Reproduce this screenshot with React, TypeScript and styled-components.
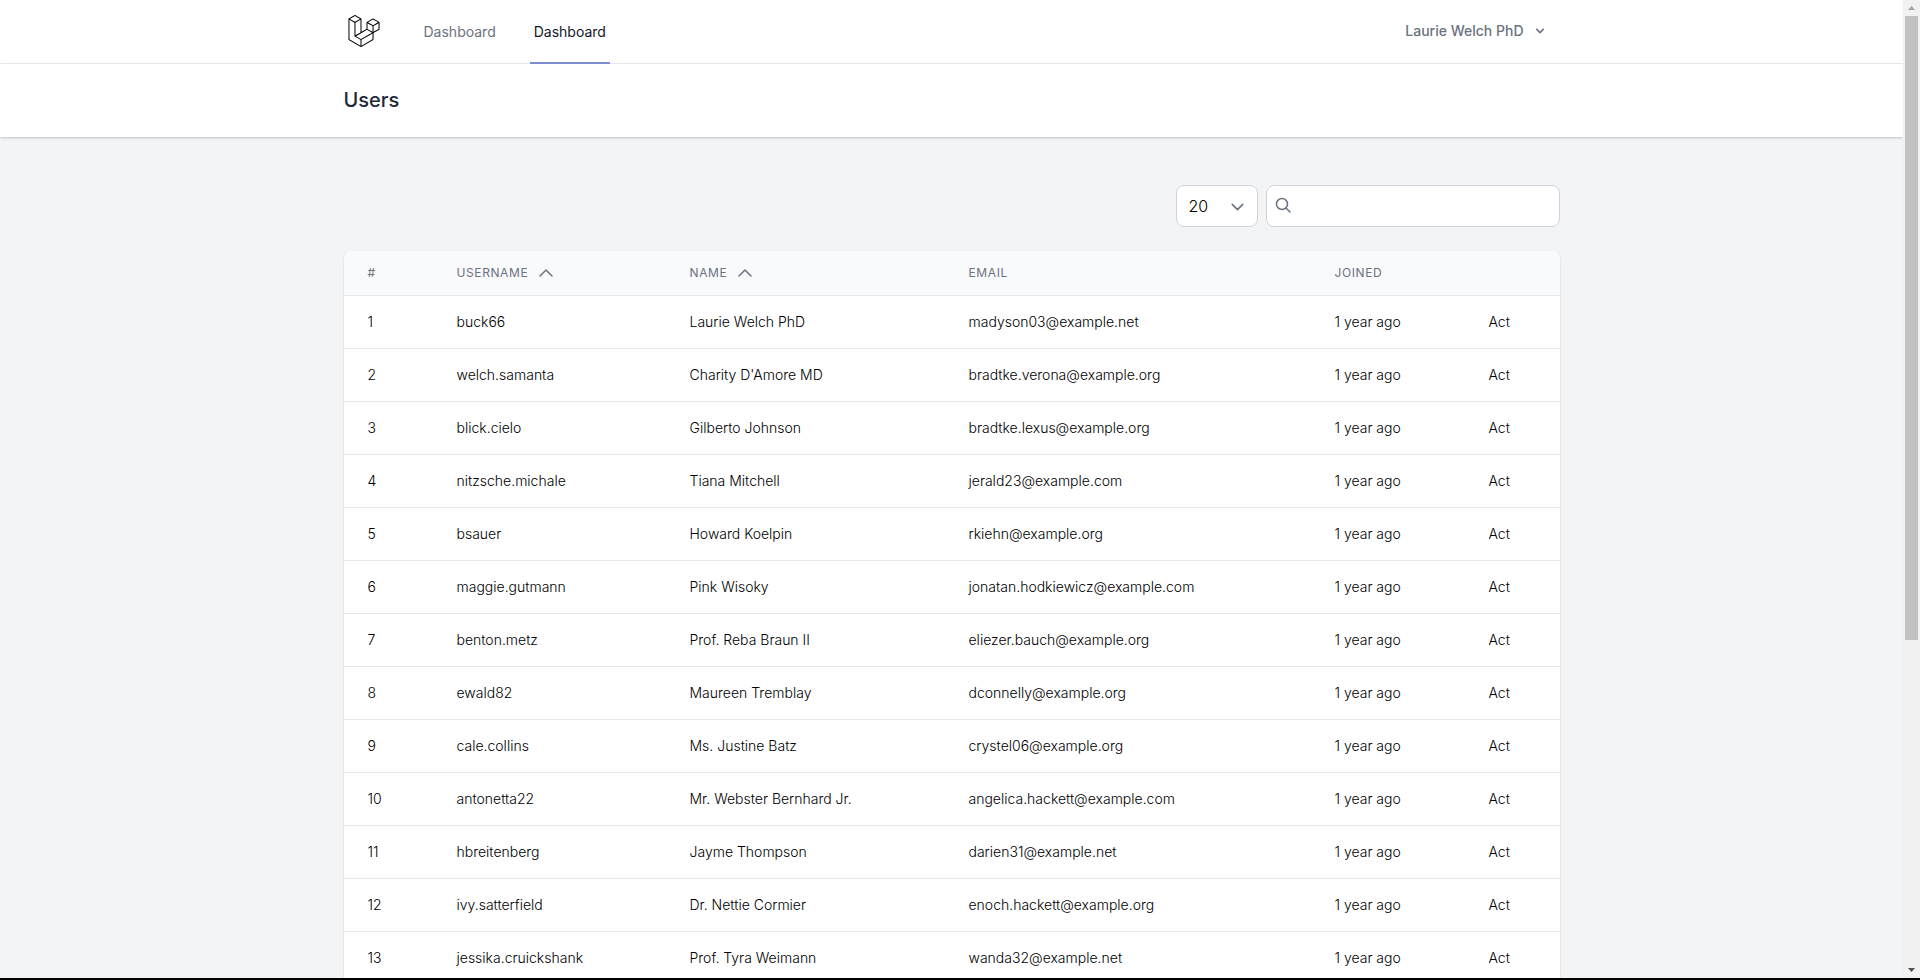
import React from 'react';
import styled, { createGlobalStyle } from 'styled-components';
import { SiLaravel } from 'react-icons/si';

const GlobalStyle = createGlobalStyle`
  *, *::before, *::after { box-sizing: border-box; }
  body {
    margin: 0;
    background: #f3f4f6;
    color: #000;
    font-family: Inter, 'Liberation Sans', sans-serif;
    font-size: 14px;
    line-height: 20px;
  }
  button, input, select { font: inherit; color: inherit; margin: 0; }
`;

const Shell = styled.div`
  display: flex;
  height: 100vh;
  border-bottom: 2px solid #000;
`;

const Page = styled.div`
  flex: 1;
  min-width: 0;
  overflow-y: auto;
  scrollbar-width: none;
  background: #f3f4f6;
`;

const Container = styled.div`
  max-width: 1280px;
  margin: 0 auto;
  padding: 0 32px;
`;

const Nav = styled.nav`
  background: #fff;
  border-bottom: 1px solid #ebecef;
`;

const NavRow = styled(Container)`
  display: flex;
  height: 63px;
`;

const LogoLink = styled.a`
  display: flex;
  align-items: center;
  padding: 0 4px 2px;
  margin-right: 36px;
  color: #000;
`;

const NavLinks = styled.div`
  display: flex;
  gap: 30px;
  margin-bottom: -1px;
`;

const NavLink = styled.a<{ $active?: boolean }>`
  display: flex;
  align-items: center;
  padding: 2px 4px 0;
  border-bottom: 2px solid ${(p) => (p.$active ? '#7f8fd6' : 'transparent')};
  color: ${(p) => (p.$active ? '#111827' : '#6b7280')};
  text-decoration: none;
`;

const UserButton = styled.button`
  display: flex;
  align-items: center;
  gap: 8px;
  margin-left: auto;
  padding: 0 12px 2px;
  border: 0;
  background: none;
  color: #6b7280;
  font-weight: 500;
`;

const Header = styled.header`
  position: relative;
  background: #fff;
  box-shadow: 0 1px 3px rgba(0, 0, 0, 0.1), 0 1px 2px rgba(0, 0, 0, 0.1);
`;

const Title = styled.h1`
  margin: 0;
  padding: 24px 0;
  color: #1f2937;
  font-size: 20px;
  line-height: 25px;
  font-weight: 500;
`;

const Main = styled.main`
  padding: 48px 0;
`;

const Toolbar = styled.div`
  display: flex;
  justify-content: flex-end;
  gap: 8px;
  margin-bottom: 24px;
`;

const Field = styled.label`
  display: grid;
  align-items: center;
  color: #6b7280;

  > * { grid-area: 1 / 1; }
  > svg { pointer-events: none; z-index: 1; }
`;

const SelectField = styled(Field)`
  > svg { justify-self: end; margin-right: 10px; }
`;

const SearchField = styled(Field)`
  > svg { margin-left: 8px; }
`;

const PerPage = styled.select`
  appearance: none;
  width: 82px;
  height: 42px;
  padding: 0 40px 0 12px;
  border: 1px solid #d1d5db;
  border-radius: 8px;
  background: #fff;
  color: #000;
  font-size: 16px;
  font-weight: 300;
`;

const SearchInput = styled.input`
  width: 294px;
  height: 42px;
  padding: 0 12px 0 40px;
  border: 1px solid #d1d5db;
  border-radius: 8px;
  background: #fff;
  color: #000;
  font-size: 16px;
`;

const Card = styled.div`
  overflow: hidden;
  border-radius: 8px;
  background: #fff;
  box-shadow: 0 1px 3px rgba(0, 0, 0, 0.1), 0 1px 2px rgba(0, 0, 0, 0.06);
`;

const Table = styled.table`
  width: 100%;
  table-layout: fixed;
  border-collapse: separate;
  border-spacing: 0;
`;

const HeadCell = styled.th`
  height: 45px;
  padding: 0 24px;
  border-bottom: 1px solid #e5e7eb;
  background: #f9fafb;
  color: #6b7280;
  font-size: 12px;
  line-height: 16px;
  font-weight: 400;
  letter-spacing: 0.05em;
  text-align: left;
  text-transform: uppercase;
`;

const SortButton = styled.button`
  display: flex;
  align-items: center;
  gap: 11px;
  padding: 0;
  border: 0;
  background: none;
  letter-spacing: inherit;
  text-transform: inherit;
`;

const Cell = styled.td`
  height: 53px;
  padding: 0 24px;
  border-bottom: 1px solid #e5e7eb;
  font-weight: 300;
  white-space: nowrap;
`;

const ScrollTrack = styled.div`
  display: flex;
  flex-direction: column;
  width: 17px;
  padding: 0 2px;
  background: #f1f1f1;
`;

const ScrollArrow = styled.svg`
  flex: none;
  width: 13px;
  height: 16px;
`;

const ScrollLane = styled.div`
  flex: 1;
`;

const ScrollThumb = styled.div`
  height: 66%;
  background: #c1c1c1;
`;

const columns = [
  { label: '#', width: 89 },
  { label: 'Username', width: 233, sortable: true },
  { label: 'Name', width: 279, sortable: true },
  { label: 'Email', width: 366 },
  { label: 'Joined', width: 154 },
  { label: '', width: 95 },
];

const users = [
  ['buck66', 'Laurie Welch PhD', 'madyson03@example.net'],
  ['welch.samanta', "Charity D'Amore MD", 'bradtke.verona@example.org'],
  ['blick.cielo', 'Gilberto Johnson', 'bradtke.lexus@example.org'],
  ['nitzsche.michale', 'Tiana Mitchell', 'jerald23@example.com'],
  ['bsauer', 'Howard Koelpin', 'rkiehn@example.org'],
  ['maggie.gutmann', 'Pink Wisoky', 'jonatan.hodkiewicz@example.com'],
  ['benton.metz', 'Prof. Reba Braun II', 'eliezer.bauch@example.org'],
  ['ewald82', 'Maureen Tremblay', 'dconnelly@example.org'],
  ['cale.collins', 'Ms. Justine Batz', 'crystel06@example.org'],
  ['antonetta22', 'Mr. Webster Bernhard Jr.', 'angelica.hackett@example.com'],
  ['hbreitenberg', 'Jayme Thompson', 'darien31@example.net'],
  ['ivy.satterfield', 'Dr. Nettie Cormier', 'enoch.hackett@example.org'],
  ['jessika.cruickshank', 'Prof. Tyra Weimann', 'wanda32@example.net'],
];

const SortIcon = () => (
  <svg width="14" height="10" viewBox="0 0 14 10" fill="none" stroke="currentColor" strokeWidth="1.5" strokeLinecap="round" strokeLinejoin="round" aria-hidden="true">
    <path d="M1 8l6-6 6 6" />
  </svg>
);

export default function App() {
  return (
    <>
      <GlobalStyle />
      <Shell>
        <Page>
          <Nav>
            <NavRow>
              <LogoLink href="#" aria-label="Home">
                <SiLaravel size={32} />
              </LogoLink>
              <NavLinks>
                <NavLink href="#">Dashboard</NavLink>
                <NavLink href="#" $active>Dashboard</NavLink>
              </NavLinks>
              <UserButton type="button">
                Laurie Welch PhD
                <svg width="16" height="16" viewBox="0 0 20 20" fill="currentColor" aria-hidden="true">
                  <path fillRule="evenodd" clipRule="evenodd" d="M5.293 7.293a1 1 0 011.414 0L10 10.586l3.293-3.293a1 1 0 111.414 1.414l-4 4a1 1 0 01-1.414 0l-4-4a1 1 0 010-1.414z" />
                </svg>
              </UserButton>
            </NavRow>
          </Nav>
          <Header>
            <Container>
              <Title>Users</Title>
            </Container>
          </Header>
          <Main>
            <Container>
              <Toolbar>
                <SelectField>
                  <PerPage aria-label="Rows per page" defaultValue="20">
                    <option>20</option>
                  </PerPage>
                  <svg width="21" height="21" viewBox="0 0 20 20" fill="none" stroke="currentColor" strokeWidth="1.5" strokeLinecap="round" strokeLinejoin="round" aria-hidden="true">
                    <path d="M5 8l5 5 5-5" />
                  </svg>
                </SelectField>
                <SearchField>
                  <SearchInput type="text" aria-label="Search users" />
                  <svg width="20" height="20" viewBox="0 0 20 20" fill="none" stroke="currentColor" strokeWidth="1.5" strokeLinecap="round" aria-hidden="true">
                    <circle cx="8" cy="8" r="5.5" />
                    <path d="M12 12l4 4" />
                  </svg>
                </SearchField>
              </Toolbar>
              <Card>
                <Table>
                  <colgroup>
                    {columns.map((c, i) => (
                      <col key={i} width={c.width} />
                    ))}
                  </colgroup>
                  <thead>
                    <tr>
                      {columns.map((c, i) => (
                        <HeadCell key={i} scope="col">
                          {c.sortable ? (
                            <SortButton type="button">
                              {c.label}
                              <SortIcon />
                            </SortButton>
                          ) : (
                            c.label
                          )}
                        </HeadCell>
                      ))}
                    </tr>
                  </thead>
                  <tbody>
                    {users.map(([username, name, email], i) => (
                      <tr key={username}>
                        <Cell>{i + 1}</Cell>
                        <Cell>{username}</Cell>
                        <Cell>{name}</Cell>
                        <Cell>{email}</Cell>
                        <Cell>1 year ago</Cell>
                        <Cell>Act</Cell>
                      </tr>
                    ))}
                  </tbody>
                </Table>
              </Card>
            </Container>
          </Main>
        </Page>
        <ScrollTrack aria-hidden="true">
          <ScrollArrow viewBox="0 0 13 16">
            <path d="M3 10h7L6.500 6z" fill="#a3a3a3" />
          </ScrollArrow>
          <ScrollLane>
            <ScrollThumb />
          </ScrollLane>
          <ScrollArrow viewBox="0 0 13 16">
            <path d="M3 6h7L6.500 10z" fill="#505050" />
          </ScrollArrow>
        </ScrollTrack>
      </Shell>
    </>
  );
}
